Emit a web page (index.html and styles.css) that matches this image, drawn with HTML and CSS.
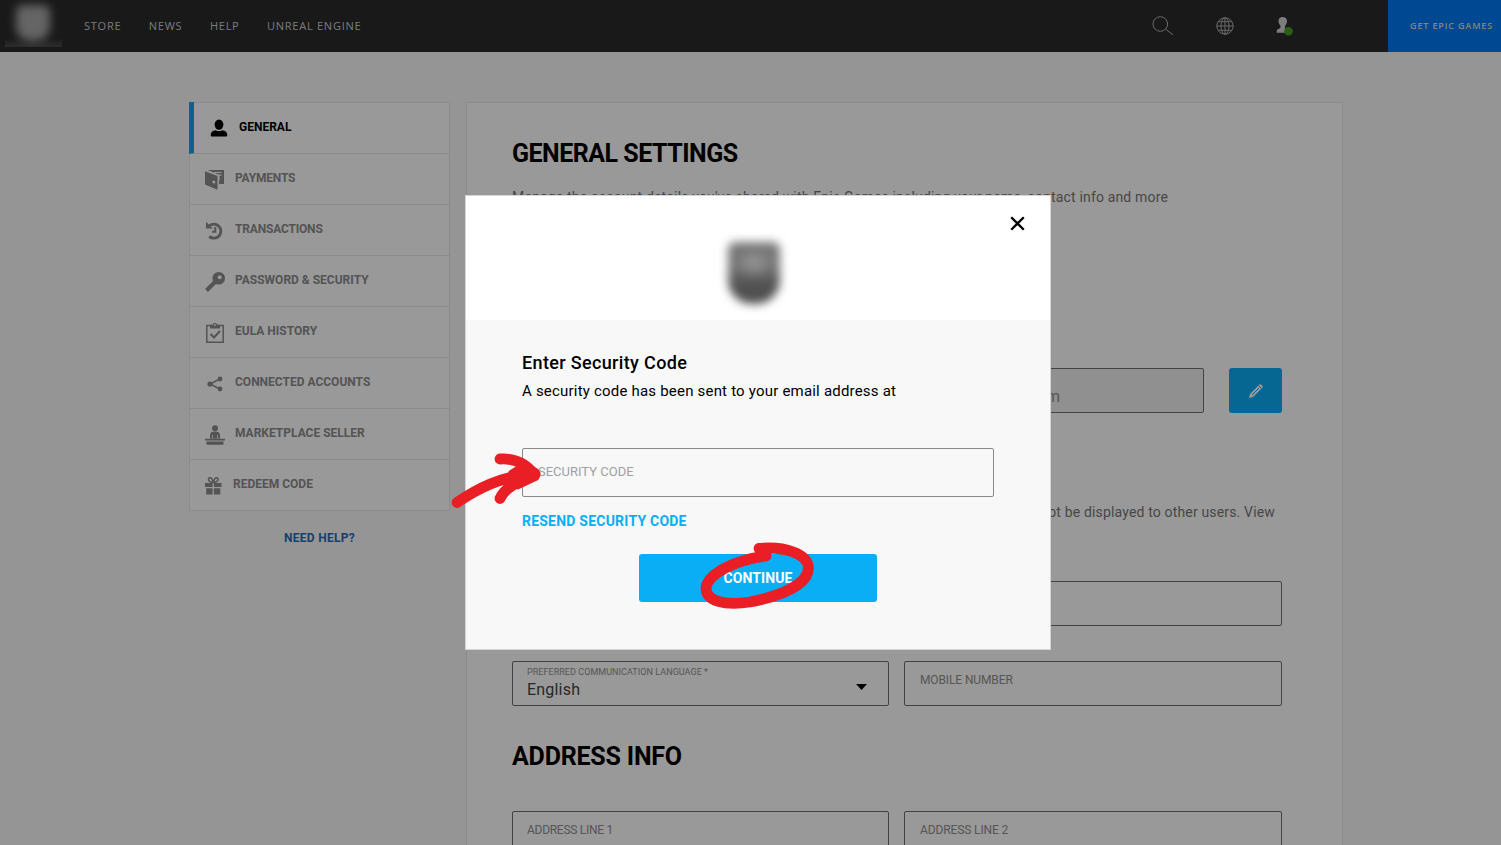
FILE: index.html
```html
<!DOCTYPE html>
<html lang="en">
<head>
<meta charset="utf-8">
<title>General Settings</title>
<link rel="stylesheet" href="styles.css">
</head>
<body>
<header class="topbar">
  <div class="brand"><span class="brand-mark"></span></div>
  <nav class="topnav">
    <a>STORE</a><a>NEWS</a><a>HELP</a><a>UNREAL ENGINE</a>
  </nav>
  <div class="tools">
    <svg class="tool" width="22" height="20" viewBox="0 0 22 20"><circle cx="8.300" cy="8" r="7.300"/><path d="M13.500 13.200L21 18.800"/></svg>
    <svg class="tool" width="18" height="18" viewBox="0 0 18 18"><circle cx="9" cy="9" r="8.200"/><ellipse cx="9" cy="9" rx="4" ry="8.200"/><path d="M9 .8V17.200M.8 9H17.200M2.200 4.700H15.800M2.200 13.300H15.800"/></svg>
    <svg class="user" width="18" height="20" viewBox="0 0 18 20"><path d="M6.500 1C4.300 1 2.500 2.600 2.500 5c0 1.800.8 3.200 1.700 4.300.5 1 .4 2.500-.3 3L1.400 13.400C.8 14 .7 15.500.7 16.800H9V10.200c1-1.400 2-3.200 2-5.200C11 2.600 9 1 6.500 1z"/><circle class="online" cx="12.500" cy="15.200" r="4.300"/></svg>
  </div>
  <a class="get">GET EPIC GAMES</a>
</header>

<div class="page">
  <aside class="side">
    <ul class="menu">
      <li class="item active"><svg width="20" height="20" viewBox="0 0 20 20"><ellipse cx="10" cy="5.600" rx="4.400" ry="5.200"/><path d="M1.700 16.500c0-4 2.600-4.900 5-5.300 2 1.500 4.600 1.500 6.600 0 2.400.4 5 1.300 5 5.300 0 .6-.4.900-1 .9H2.700c-.6 0-1-.3-1-.9z"/></svg><span>GENERAL</span></li>
      <li class="item tight"><svg width="20" height="20" viewBox="0 0 20 20"><path d="M0 1.200L12.500 6V19.800L0 14.500z"/><path d="M2.500 0H19V14H14V4.800z"/><path class="cut" d="M9 2.500H16.500M12.500 5.200H16.500M14 10.500V6"/><circle class="hole" cx="8.800" cy="12" r="1.500"/></svg><span>PAYMENTS</span></li>
      <li class="item tight"><svg width="20" height="20" viewBox="0 0 20 20"><path class="line w3" d="M3.800 5.400A7 7 0 1 1 4.200 15.400"/><path d="M1 .8V7.500H8z"/><path class="line w2" d="M10.300 6V10.800H7"/></svg><span>TRANSACTIONS</span></li>
      <li class="item"><svg width="20" height="20" viewBox="0 0 20 20"><path class="line w4" d="M10.500 9.500L1.500 18.500M5.500 14.500L7 16"/><circle cx="13.700" cy="6.300" r="6.300"/><circle class="hole" cx="14.700" cy="5.300" r="2"/></svg><span>PASSWORD &amp; SECURITY</span></li>
      <li class="item"><svg width="20" height="20" viewBox="0 0 20 20"><path class="line" d="M1.800 2.600H18.200V19.200H1.800z"/><path d="M5 1.800H8A2 2 0 0 1 12 1.800H15V5.500H5z"/><circle class="hole" cx="10" cy="2" r=".9"/><path class="line w2" d="M5.500 11L9 14.500 15 8"/></svg><span>EULA HISTORY</span></li>
      <li class="item"><svg width="20" height="20" viewBox="0 0 20 20"><path class="line" d="M15 5L5 10 15 15"/><circle cx="15" cy="5" r="2.400"/><circle cx="5" cy="10" r="2.600"/><circle cx="15" cy="15" r="2.400"/></svg><span>CONNECTED ACCOUNTS</span></li>
      <li class="item"><svg width="20" height="20" viewBox="0 0 20 20"><circle cx="10" cy="3.200" r="3"/><path d="M5 13.500V10C5 7.500 7 6.500 10 6.500S15 7.500 15 10V13.500zM0 13.800H20V15.400H0zM1.500 16.500H18.500V19.800H1.500z"/><path class="cut thin" d="M7.500 10V13.500M12.500 10V13.500"/></svg><span>MARKETPLACE SELLER</span></li>
      <li class="item"><svg width="18" height="20" viewBox="0 0 18 20"><path class="line" d="M8.300 6.500C3 6.500 2.500 2 4.800 1.800 7 1.600 7.800 4.500 8.300 6.500 8.800 4.500 9.600 1.600 11.800 1.800 14 2 13.500 6.500 8.300 6.500z"/><path d="M0 7H7.600V11H0zM8.900 7H16.500V11H8.900zM1.200 12.300H7.600V18.500H1.200zM8.900 12.300H15.300V18.500H8.900z"/></svg><span>REDEEM CODE</span></li>
    </ul>
    <a class="help">NEED HELP?</a>
  </aside>

  <main class="panel">
    <h2 class="title">GENERAL SETTINGS</h2>
    <p class="desc">Manage the account details you've shared with Epic Games including your name, contact info and more</p>
    <div class="email-row">
      <div class="field filled">name@example.com</div>
      <button class="edit"><svg width="16" height="16" viewBox="0 0 16 16"><path d="M1 15L2 11 11.500 1.500C12.500.5 15.500 3.500 14.500 4.500L5 14z"/><path d="M4 12L11 5M10.500 2.500L13.500 5.500"/></svg></button>
    </div>
    <p class="desc privacy">This information is private and will not be displayed to other users. View</p>
    <div class="row row-name"><div class="field"></div><div class="field"></div></div>
    <div class="row row-lang">
      <div class="field select"><div class="stack"><small>PREFERRED COMMUNICATION LANGUAGE *</small><b>English</b></div><i class="caret"></i></div>
      <div class="field second">MOBILE NUMBER</div>
    </div>
    <h2 class="title address">ADDRESS INFO</h2>
    <div class="row"><div class="field line-one">ADDRESS LINE 1</div><div class="field second">ADDRESS LINE 2</div></div>
  </main>
</div>

<div class="overlay">
  <section class="modal">
    <div class="modal-head">
      <svg class="close" width="15" height="15" viewBox="0 0 15 15"><path d="M1.200 1.200L13.800 13.800M13.800 1.200L1.200 13.800"/></svg>
      <div class="shield"></div>
    </div>
    <div class="modal-body">
      <h3>Enter Security Code</h3>
      <p class="sent">A security code has been sent to your email address at</p>
      <div class="code">SECURITY CODE</div>
      <a class="resend">RESEND SECURITY CODE</a>
      <button class="continue">CONTINUE</button>
    </div>
  </section>
  <svg class="marks" width="1501" height="845" viewBox="0 0 1501 845">
    <path d="M457 502.500C477 489 501 476 532 474.500M500 459C514 458 526 464 534 474M500 498.500C505 487 520 481 534 475"/>
    <path class="solid" d="M510 472L524 463 537 470Q541 474 537 479L518 488 508 478Z"/>
    <path d="M759 548.500C785 546 808 554 808.500 568C808 585 780 596 750 602C724 606 706 601 706 588C708 573 736 560 766 556"/>
  </svg>
</div>
</body>
</html>
```
FILE: styles.css
```css
* { box-sizing: border-box; }
body { margin: 0; height: 845px; overflow: hidden; background: #f8f8f8; font-family: Roboto, "Liberation Sans", sans-serif; color: #000; }
h2, h3, p, ul { margin: 0; padding: 0; }
button { border: 0; padding: 0; font-family: inherit; }
svg { display: block; flex: none; }

.topbar { display: flex; align-items: center; height: 52px; background: #2a2a2a; font-family: "Open Sans", sans-serif; color: #ccc; }
.brand { display: flex; justify-content: center; width: 57px; height: 47px; margin: 0 22px 5px 5px; overflow: hidden; background: linear-gradient(transparent 38px, #484848 46px); }
.brand-mark { width: 34px; height: 36px; margin: 5px 0 0 -1px; border-radius: 6px 6px 14px 14px; background: #a8a8a8; filter: blur(5px); }
.topnav { display: flex; gap: 27.500px; padding-bottom: 1px; font-size: 11px; font-weight: 500; letter-spacing: .75px; white-space: nowrap; }
.tools { display: flex; align-items: center; gap: 42px; margin-left: auto; margin-right: 94px; }
.tool { fill: none; stroke: #b0b0b0; stroke-width: 1; }
.user { fill: #d0d0d0; }
.online { fill: #4c9d1e; }
.get { display: flex; align-items: center; width: 113px; height: 52px; padding: 0 0 2px 22px; background: #0078f2; color: #ddd; font-size: 9px; font-weight: 600; letter-spacing: .85px; white-space: nowrap; }

.page { display: flex; align-items: flex-start; gap: 16px; padding: 50px 0 0 189px; }
.side { width: 261px; }
.menu { list-style: none; background: #fff; border: 1px solid #e8e8e8; }
.item { display: flex; align-items: flex-start; gap: 10px; height: 51px; padding: 16px 0 0 15px; border-bottom: 1px solid #e8e8e8; font-size: 12px; font-weight: 700; line-height: 16px; color: #8c8c8c; fill: #8c8c8c; white-space: nowrap; }
.tight { letter-spacing: -.18px; }
.item:last-child { border-bottom: 0; height: 50px; }
.item.active { margin-left: -1px; margin-top: -1px; height: 52px; padding: 17px 0 0 15px; border-left: 5px solid #0aa6ea; color: #000; fill: #000; }
.line { fill: none; stroke: #8c8c8c; stroke-width: 1.500; }
.w2 { stroke-width: 2; }
.w3 { stroke-width: 2.800; }
.w4 { stroke-width: 4; }
.cut { fill: none; stroke: #fff; stroke-width: 1.200; }
.thin { stroke-width: .8; }
.hole { fill: #fff; }
.help { display: block; margin-top: 19px; text-align: center; color: #2a6cb5; font-size: 12px; font-weight: 700; line-height: 16px; letter-spacing: .28px; }

.panel { width: 877px; height: 760px; padding: 34px 60px 0 45px; background: #fff; border: 1px solid #e8e8e8; }
.title { font-size: 25px; font-weight: 700; line-height: 34px; letter-spacing: -.5px; white-space: nowrap; }
.desc { margin-top: 16px; font-size: 14px; line-height: 20px; letter-spacing: .16px; color: #777; white-space: nowrap; }
.email-row { display: flex; justify-content: space-between; margin-top: 161px; }
.field { height: 45px; padding: 11px 14px; border: 1px solid #6f6f6f; border-radius: 2px; font-size: 12px; line-height: 14px; color: #8f8f8f; }
.line-one { letter-spacing: -.28px; }
.second { padding-left: 15px; letter-spacing: -.12px; }
.filled { width: 692px; padding: 18px 143px 0 14px; background: #f0f0f0; font-size: 16px; line-height: 20px; text-align: right; }
.edit { display: flex; align-items: center; justify-content: center; width: 53px; height: 45px; border-radius: 3px; background: #0aaef4; }
.edit svg { fill: #fff; }
.edit path + path { fill: none; stroke: #0aaef4; stroke-width: 1; }
.privacy { margin-top: 89px; padding-right: 7px; text-align: right; }
.row { display: grid; grid-template-columns: 377px 378px; gap: 15px; }
.row-name { margin-top: 59px; }
.row-lang { margin-top: 35px; }
.select { display: flex; justify-content: space-between; padding: 4px 21px 0 14px; }
.stack { display: flex; flex-direction: column; }
.stack small { font-size: 9px; line-height: 12px; letter-spacing: .05px; }
.stack b { font-size: 16px; font-weight: 400; line-height: 24px; letter-spacing: .2px; color: #444; }
.caret { width: 11px; height: 6px; margin-top: 18px; background: #000; clip-path: polygon(0 0, 100% 0, 50% 100%); }
.address { margin: 34px 0 37px; letter-spacing: -.2px; }

.overlay { position: fixed; inset: 0; display: flex; align-items: flex-start; padding: 195px 0 0 465px; background: rgba(0, 0, 0, .4); }
.modal { width: 586px; height: 455px; border: 1px solid #d5d5d5; background: #f8f8f8; }
.modal-head { display: flex; flex-direction: column; height: 124px; background: #fff; }
.close { align-self: flex-end; margin: 20px 25px 0 0; fill: none; stroke: #000; stroke-width: 2.300; }
.shield { width: 52px; height: 62px; margin: 11px 0 0 262px; border-radius: 7px 7px 24px 24px; background: radial-gradient(ellipse 18px 14px at 50% 34%, #999, transparent), linear-gradient(#777, #777 40%, #505050 70%); filter: blur(5px); }
.modal-body { padding: 30px 56px 0 56px; }
h3 { font-size: 18px; font-weight: 500; line-height: 26px; letter-spacing: .35px; }
.sent { margin-top: 5px; font-size: 15px; line-height: 20px; letter-spacing: .2px; white-space: nowrap; }
.code { height: 49px; margin-top: 47px; padding: 14px 15px; border: 1px solid #8a8a8a; border-radius: 2px; color: #a0a0a0; font-size: 13px; line-height: 18px; }
.resend { display: block; margin-top: 15px; color: #0aaef4; font-size: 14px; font-weight: 700; line-height: 18px; letter-spacing: .22px; }
.continue { display: block; width: 238px; height: 48px; margin: 24px auto 0; border-radius: 3px; background: #0aaef4; color: #fff; font-size: 14px; font-weight: 700; letter-spacing: .1px; }
.marks { position: absolute; left: 0; top: 0; fill: none; stroke: #ea1f26; stroke-width: 10.800; stroke-linecap: round; stroke-linejoin: round; }
.solid { fill: #ea1f26; stroke-width: 3; }
```
